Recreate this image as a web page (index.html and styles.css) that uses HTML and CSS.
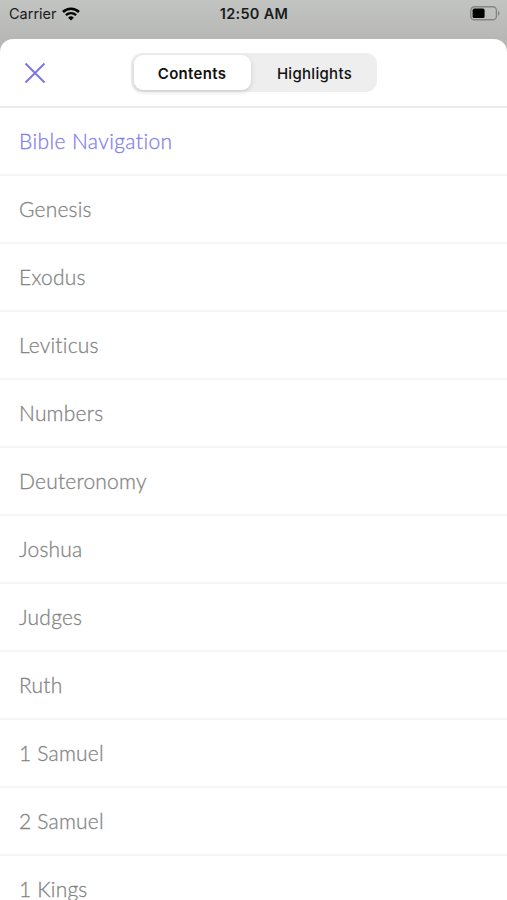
FILE: index.html
```html
<!DOCTYPE html>
<html lang="en">
<head>
    <meta charset="utf-8">
    <title>Contents</title>
    <link rel="stylesheet" href="styles.css">
</head>
<body>
    <!-- Status bar -->
    <div class="status_bar">
        <div class="carrier">
            <span>Carrier</span>
            <svg class="wifi" width="18" height="14" viewBox="0 0 18 14">
                <path d="M1 5 A11.5 11.5 0 0 1 17 5" fill="none" stroke="#000" stroke-width="2.6"/>
                <path d="M3.9 8.2 A7.4 7.4 0 0 1 14.1 8.2" fill="none" stroke="#000" stroke-width="2.3"/>
                <path d="M6.1 10.7 A4.2 4.2 0 0 1 11.9 10.7 L9 13.6 Z" fill="#000"/>
            </svg>
        </div>
        <div class="time">12:50 AM</div>
        <svg class="battery" width="31" height="15" viewBox="0 0 31 15">
            <rect x="0.8" y="0.8" width="25.6" height="13" rx="3.6" fill="none" stroke="#858684" stroke-width="1.4"/>
            <rect x="2.6" y="2.6" width="12" height="9.4" rx="1.6" fill="#000"/>
            <path d="M28 4.8 A2.8 2.8 0 0 1 28 9.8 Z" fill="#858684"/>
        </svg>
    </div>

    <div class="sheet">
        <div class="header">
            <button class="close" aria-label="Close">
                <svg width="22" height="22" viewBox="0 0 22 22">
                    <path d="M1.5 1.5 L20.5 20.5 M20.5 1.5 L1.5 20.5" fill="none" stroke="#7775e8" stroke-width="1.9"/>
                </svg>
            </button>
            <div class="tabs">
                <button class="tab active">Contents</button>
                <button class="tab">Highlights</button>
            </div>
        </div>

        <ul class="books">
            <li class="current">Bible Navigation</li>
            <li>Genesis</li>
            <li>Exodus</li>
            <li>Leviticus</li>
            <li>Numbers</li>
            <li>Deuteronomy</li>
            <li>Joshua</li>
            <li>Judges</li>
            <li>Ruth</li>
            <li>1 Samuel</li>
            <li>2 Samuel</li>
            <li>1 Kings</li>
        </ul>
    </div>
</body>
</html>
```

FILE: styles.css
```css
* {
    box-sizing: border-box;
}

body {
    margin: 0;
    height: 900px;
    overflow: hidden;
    font-family: Inter, sans-serif;
    background: linear-gradient(#c2c4c1, #b7b8b6 39px, #b7b8b6);
}

/* Status bar */
.status_bar {
    display: grid;
    grid-template-columns: 1fr auto 1fr;
    align-items: center;
    height: 39px;
    padding: 0 6px 12px 9px;
    color: #1a1b1a;
    font-size: 14.5px;
}

.carrier {
    display: flex;
    align-items: center;
    gap: 5px;
}

.time {
    margin-right: 2px;
    font-weight: 600;
    letter-spacing: 0.3px;
}

.battery {
    justify-self: end;
}

/* Sheet */
.sheet {
    height: 861px;
    overflow: hidden;
    background-color: #fff;
    border-radius: 13px 13px 0 0;
}

.header {
    display: grid;
    grid-template-columns: 1fr auto 1fr;
    align-items: center;
    height: 69px;
    padding: 0 24px;
    border-bottom: 2px solid #ebebeb;
}

.close {
    display: flex;
    justify-self: start;
    padding: 0;
    border: none;
    background: none;
}

.tabs {
    display: flex;
    width: 246px;
    height: 39px;
    padding: 2px 2px 2px 3px;
    border-radius: 11px;
    background-color: #eeeeee;
}

.tab {
    flex: 1;
    padding: 1px 0 0 4px;
    border: none;
    border-radius: 9px;
    background: none;
    color: #111;
    font-family: inherit;
    font-size: 15px;
    font-weight: 500;
    letter-spacing: 0.3px;
}

.tab.active {
    flex: none;
    width: 117px;
    padding-left: 0;
    background-color: #fff;
    font-weight: 600;
    box-shadow: 0 2px 5px rgba(0, 0, 0, 0.14);
}

/* Book list */
.books {
    margin: 0;
    padding: 0;
    list-style: none;
    color: #858585;
    font-family: Lato, sans-serif;
    font-size: 21px;
    font-weight: 300;
    -webkit-text-stroke: 0.3px;
}

.books li {
    height: 68px;
    padding-left: 19px;
    border-bottom: 2px solid #f5f5f5;
    line-height: 66px;
    letter-spacing: 0.2px;
}

.books .current {
    color: #8381ec;
    letter-spacing: 0.4px;
}
```
